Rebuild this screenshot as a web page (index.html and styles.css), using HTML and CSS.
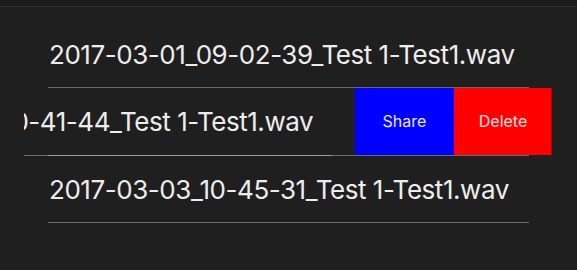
FILE: index.html
```html
<!DOCTYPE html>
<html>
<head>
<meta charset="utf-8">
<link rel="stylesheet" href="styles.css">
</head>
<body>
<div class="topbar"></div>
<ul class="list">
  <li class="row"><span class="name">2017-03-01_09-02-39_Test 1-Test1.wav</span></li>
  <li class="row swiped">
    <div class="clip">
      <div class="content"><span class="name">2017-03-02_10-41-44_Test 1-Test1.wav</span></div>
    </div>
    <div class="actions">
      <button class="action share">Share</button>
      <button class="action delete">Delete</button>
    </div>
  </li>
  <li class="row"><span class="name">2017-03-03_10-45-31_Test 1-Test1.wav</span></li>
</ul>
</body>
</html>
```
FILE: styles.css
```css
html, body {
  margin: 0;
  padding: 0;
  background: #1f1f1f;
  width: 577px;
  height: 270px;
  overflow: hidden;
  font-family: Inter, Roboto, "Liberation Sans", sans-serif;
}
.topbar {
  height: 6px;
  background: #1b1b1b;
  border-bottom: 1px solid #2f2f2f;
}
.list {
  list-style: none;
  margin: 13.5px 0 0;
  padding: 0;
}
.row {
  position: relative;
  height: 67.5px;
  display: flex;
  align-items: center;
  padding-left: 49px;
}
.row::after {
  content: "";
  position: absolute;
  left: 48px;
  right: 48px;
  bottom: 0;
  height: 1px;
  background: rgba(255, 255, 255, 0.34);
  z-index: 2;
}
.name {
  color: #ededed;
  font-size: 26px;
  letter-spacing: -0.45px;
  white-space: nowrap;
}
.swiped {
  padding-left: 24px;
}
.clip {
  width: 331px;
  height: 100%;
  overflow: hidden;
  position: relative;
}
.content {
  position: relative;
  margin-left: -221px;
  width: 577px;
  height: 100%;
  display: flex;
  align-items: center;
}
.content .name {
  margin-left: 49px;
}
.content::after {
  content: "";
  position: absolute;
  left: 48px;
  right: 48px;
  bottom: 0;
  height: 1px;
  background: rgba(255, 255, 255, 0.34);
}
.actions {
  position: absolute;
  top: 0;
  bottom: 1px;
  left: 355px;
  width: 197px;
  display: flex;
  z-index: 1;
}
.action {
  border: 0;
  margin: 0;
  padding: 0;
  flex: 0 0 auto;
  height: 100%;
  color: #e6e6ff;
  font-family: Inter, Roboto, "Liberation Sans", sans-serif;
  font-size: 16px;
}
.share {
  width: 99px;
  background: #0000ff;
}
.delete {
  width: 98px;
  background: #ff0000;
  color: #ffe0e0;
  box-shadow: inset -1px 0 0 #b00000;
}
```
